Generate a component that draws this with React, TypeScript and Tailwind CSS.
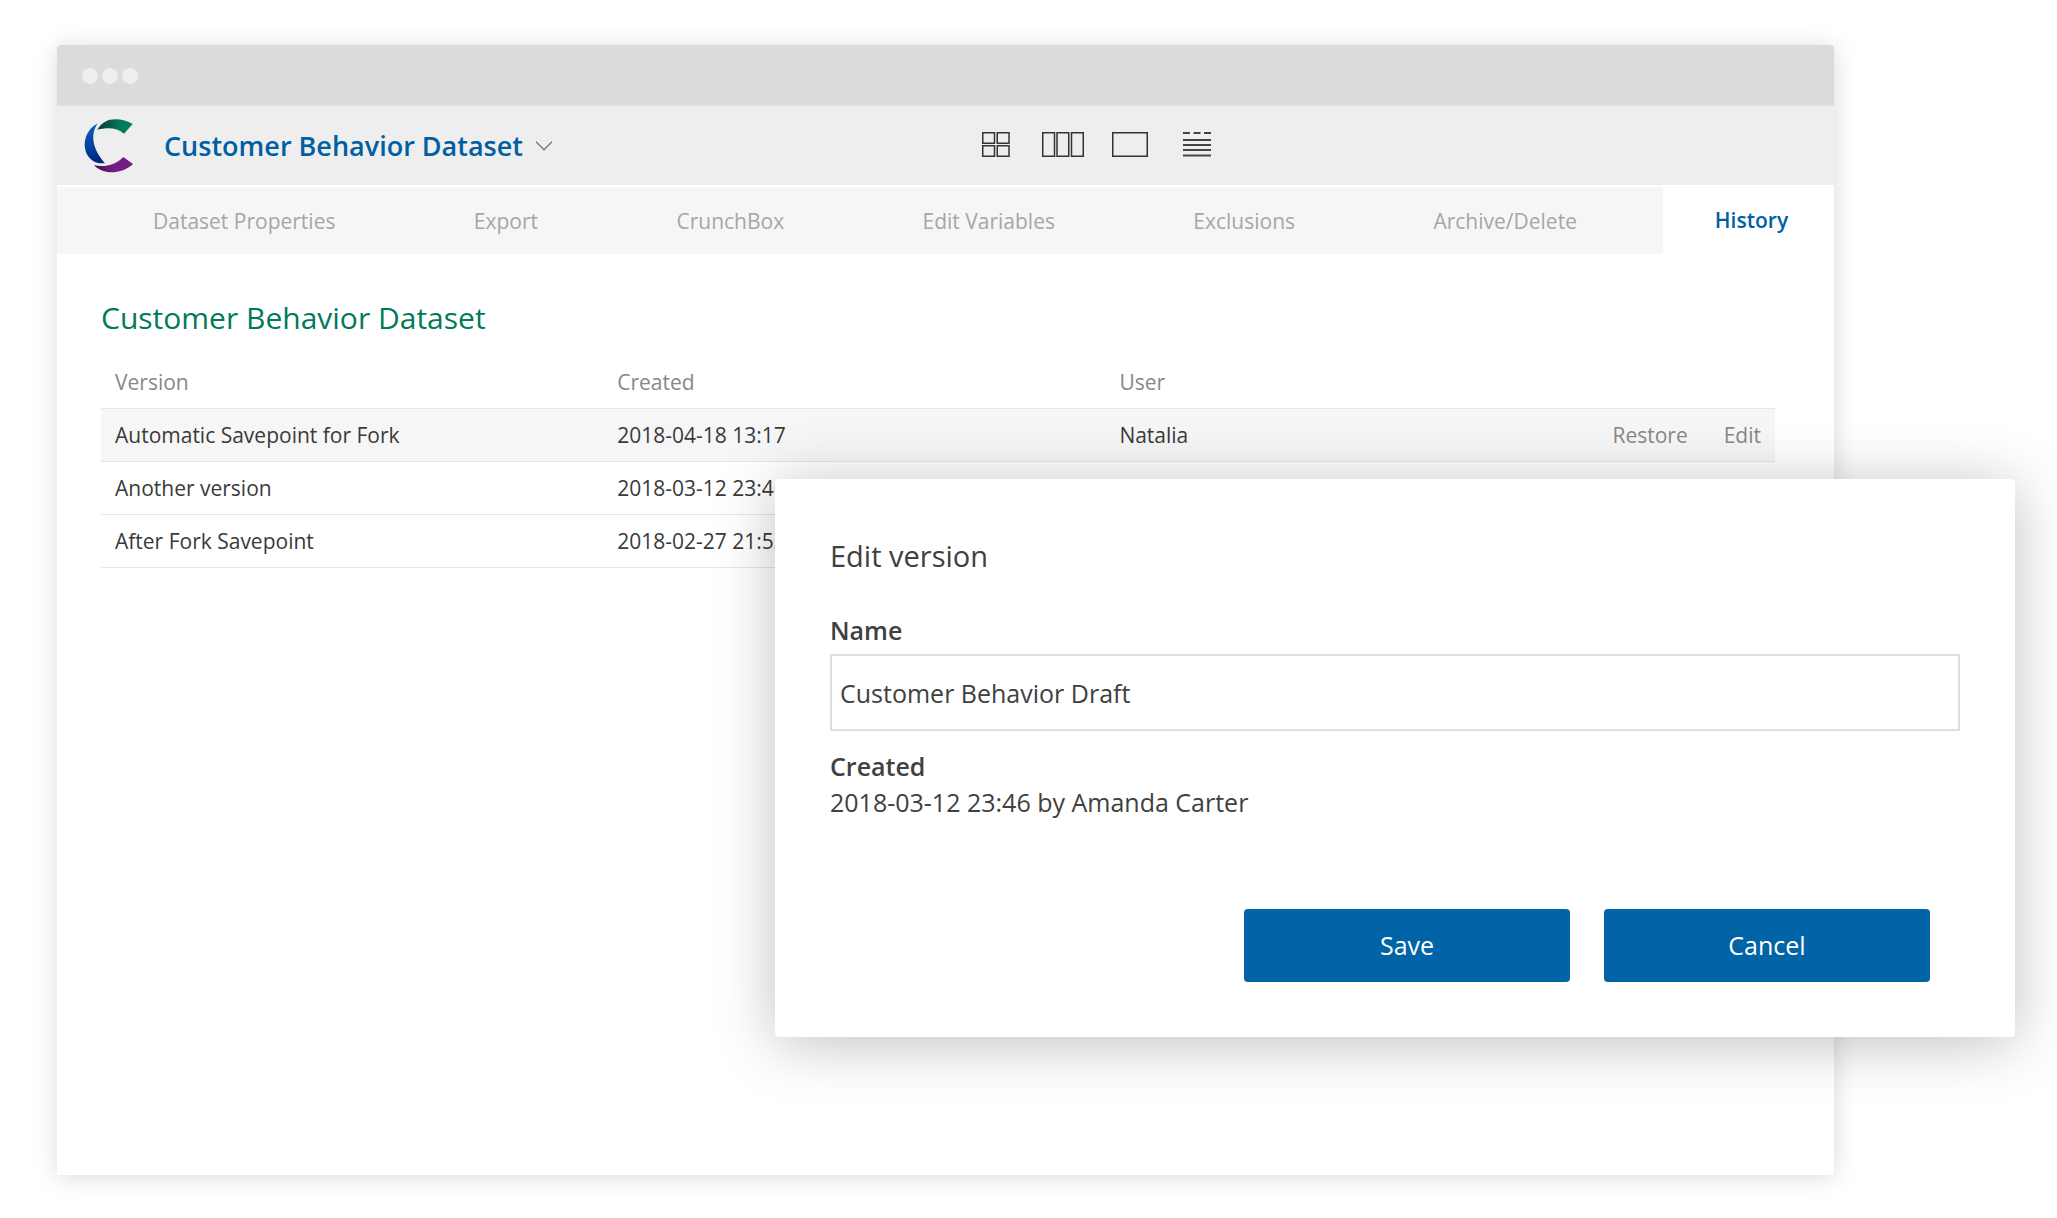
import { useState } from 'react';

const tabs = ['Dataset Properties', 'Export', 'CrunchBox', 'Edit Variables', 'Exclusions', 'Archive/Delete'];

const versions = [
  { name: 'Automatic Savepoint for Fork', created: '2018-04-18 13:17', user: 'Natalia', selected: true },
  { name: 'Another version', created: '2018-03-12 23:46', user: 'Amanda Carter', selected: false },
  { name: 'After Fork Savepoint', created: '2018-02-27 21:52', user: 'Natalia', selected: false },
];

function Logo() {
  return (
    <svg width="50" height="56" viewBox="12 24 150 168" aria-label="Crunch" role="img">
      <defs>
        <linearGradient id="logo-green" x1="0" x2="1" y1="0" y2="0">
          <stop offset="0" stopColor="#04402f" />
          <stop offset="0.7" stopColor="#057a5c" />
        </linearGradient>
        <linearGradient id="logo-blue" x1="0" x2="0.3" y1="0" y2="1">
          <stop offset="0" stopColor="#0a63c9" />
          <stop offset="1" stopColor="#002a80" />
        </linearGradient>
        <linearGradient id="logo-purple" x1="0" x2="1" y1="0" y2="0">
          <stop offset="0" stopColor="#3f0d4e" />
          <stop offset="0.5" stopColor="#701f83" />
        </linearGradient>
      </defs>
      <path d="M52 59C66 37 84 28 105 28C125 28 144 33 158 42L132 71C112 53 84 51 52 59Z" fill="url(#logo-green)" />
      <path d="M53 40C28 54 14 78 14 105C14 132 32 156 58 160L75 160C48 130 24 84 53 40Z" fill="url(#logo-blue)" />
      <path d="M42 166C76 173 108 164 130 141L159 162C142 178 118 187 94 187C74 187 56 180 42 166Z" fill="url(#logo-purple)" />
    </svg>
  );
}

function GridIcon() {
  return (
    <svg width="28" height="25" viewBox="0 0 28 25" fill="none" stroke="#333" strokeWidth="1.5">
      <path d="M.75.75h11.75v10.5H.75zM15.25.75H27v10.5H15.25zM.75 13.75h11.75v10.5H.75zM15.25 13.75H27v10.5H15.25z" />
    </svg>
  );
}

function ColumnsIcon() {
  return (
    <svg width="42" height="25" viewBox="0 0 42 25" fill="none" stroke="#333" strokeWidth="1.5">
      <path d="M.75.75H12.5v23.5H.75zM15 .75h11.75v23.5H15zM29.5.75h11.75v23.5H29.5z" />
    </svg>
  );
}

function PanelIcon() {
  return (
    <svg width="36" height="25" viewBox="0 0 36 25" fill="none" stroke="#333" strokeWidth="1.5">
      <path d="M.75.75h34.5v23.5H.75z" />
    </svg>
  );
}

function ListIcon() {
  return (
    <svg width="28" height="25" viewBox="0 0 28 25" fill="none" stroke="#444" strokeWidth="2">
      <path d="M0 1h7M10.500 1h7M21 1h7M0 8h28M0 13h28M0 18h28M0 23.500h28" />
    </svg>
  );
}

function EditDialog() {
  const [name, setName] = useState('Customer Behavior Draft');
  return (
    <div
      role="dialog"
      aria-labelledby="dialog-title"
      className="absolute top-[479px] right-[42px] left-[775px] rounded bg-white p-[55px] text-[25px] text-[#404040] shadow-[0_6px_60px_rgba(0,0,0,0.25)]"
    >
      <h2 id="dialog-title" className="text-[29px] leading-[44px]">Edit version</h2>
      <label htmlFor="version-name" className="mt-[34px] block leading-9 font-semibold">Name</label>
      <input
        id="version-name"
        value={name}
        onChange={(e) => setName(e.target.value)}
        className="mt-[6px] block h-[77px] w-full border-2 border-[#dedede] px-2 outline-none"
      />
      <p className="mt-[17px] leading-9 font-semibold">Created</p>
      <p className="leading-9">2018-03-12 23:46 by Amanda Carter</p>
      <div className="mt-[89px] flex justify-end gap-[34px] pr-[30px] text-white">
        <button className="h-[73px] w-[326px] rounded bg-[#0064a6]">Save</button>
        <button className="h-[73px] w-[326px] rounded bg-[#0064a6]">Cancel</button>
      </div>
    </div>
  );
}

export default function App() {
  return (
    <div className="relative min-h-screen overflow-hidden bg-white pt-[45px] pr-[223px] pb-[43px] pl-[57px] font-['Open_Sans','Noto_Sans',sans-serif]">
      <main className="min-h-[1130px] overflow-hidden rounded-t bg-white shadow-[0_2px_24px_rgba(0,0,0,0.15)]">
        <div className="flex h-[61px] items-center gap-1 border-b border-[#e4e4e4] bg-[#dbdbdb] pt-[2px] pl-[25px]">
          <span className="size-4 rounded-full bg-[#eee]" />
          <span className="size-4 rounded-full bg-[#eee]" />
          <span className="size-4 rounded-full bg-[#eee]" />
        </div>

        <header className="flex h-[79px] items-center bg-[#eee]">
          <div className="flex w-[52%] items-center pl-[27px]">
            <Logo />
            <button className="ml-[30px] flex items-center gap-3 text-[27px] leading-9 font-semibold text-[#005fa3]">
              Customer Behavior Dataset
              <svg width="18" height="10" viewBox="0 0 18 10" fill="none" stroke="#777" strokeWidth="1.3">
                <path d="M1 .8l8 8 8-8" />
              </svg>
            </button>
          </div>
          <div className="flex items-center pb-[3px] pl-px">
            <button aria-label="Grid view"><GridIcon /></button>
            <button aria-label="Column view" className="ml-8"><ColumnsIcon /></button>
            <button aria-label="Single view" className="ml-7"><PanelIcon /></button>
            <button aria-label="List view" className="ml-[35px]"><ListIcon /></button>
          </div>
        </header>

        <nav className="mt-[2px] flex h-[67px] text-[21px]">
          <div className="flex flex-1 items-center justify-between bg-[#f6f6f6] pt-[2px] pr-[86px] pl-24 text-[#a6a6a6]">
            {tabs.map((tab) => (
              <a key={tab} href="#">{tab}</a>
            ))}
          </div>
          <a href="#" aria-current="page" className="flex w-[171px] items-center justify-center pl-[6px] font-semibold text-[#005fa3]">
            History
          </a>
        </nav>

        <section className="pr-[59px] pl-[44px]">
          <h1 className="mt-[42px] text-[30px] leading-[44px] text-[#007a5a]">Customer Behavior Dataset</h1>
          <table className="mt-[16px] w-full table-fixed text-left text-[21px] leading-[30px] text-[#3a3a3a]">
            <thead>
              <tr className="h-[52px] border-b border-[#e6e6e6] text-[#888]">
                <th className="w-[30%] px-[14px] font-normal">Version</th>
                <th className="w-[30%] px-[14px] font-normal">Created</th>
                <th className="w-[22%] px-[14px] font-normal">User</th>
                <th className="px-[14px]" aria-label="Actions" />
              </tr>
            </thead>
            <tbody>
              {versions.map((v) => (
                <tr key={v.name} className={v.selected ? 'h-[53px] border-b border-[#e6e6e6] bg-[#f6f6f6]' : 'h-[53px] border-b border-[#e6e6e6]'}>
                  <td className="px-[14px]">{v.name}</td>
                  <td className="px-[14px]">{v.created}</td>
                  <td className="px-[14px]">{v.user}</td>
                  <td className="px-[14px] text-[#888]">
                    {v.selected && (
                      <div className="flex justify-end gap-9">
                        <button>Restore</button>
                        <button>Edit</button>
                      </div>
                    )}
                  </td>
                </tr>
              ))}
            </tbody>
          </table>
        </section>
      </main>
      <EditDialog />
    </div>
  );
}
